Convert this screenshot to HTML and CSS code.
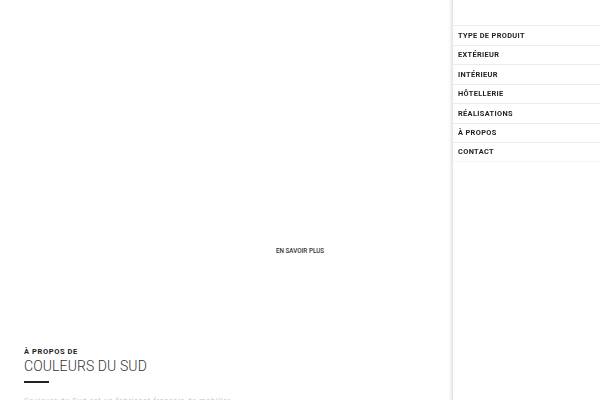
FILE: index.html
```html
<!DOCTYPE html>
<html lang="fr">
<head>
<meta charset="utf-8">
<link rel="stylesheet" href="styles.css">
</head>
<body>
<main class="page">
  <section class="hero">
    <a class="more" href="#">EN SAVOIR PLUS</a>
  </section>
  <section class="about">
    <div class="kicker">À PROPOS DE</div>
    <h1 class="title">COULEURS DU SUD</h1>
    <div class="bar"></div>
    <p class="text">Couleurs du Sud est un fabricant français de mobilier</p>
  </section>
</main>
<nav class="menu">
  <div class="menu-top"></div>
  <ul class="menu-list">
    <li><a href="#">TYPE DE PRODUIT</a></li>
    <li><a href="#">EXTÉRIEUR</a></li>
    <li><a href="#">INTÉRIEUR</a></li>
    <li><a href="#">HÔTELLERIE</a></li>
    <li><a href="#">RÉALISATIONS</a></li>
    <li><a href="#">À PROPOS</a></li>
    <li><a href="#">CONTACT</a></li>
  </ul>
</nav>
</body>
</html>
```
FILE: styles.css
```css
* { box-sizing: border-box; }
html, body { margin: 0; padding: 0; }
body {
  width: 600px;
  height: 400px;
  overflow: hidden;
  background: #fff;
  font-family: Roboto, "Liberation Sans", sans-serif;
  color: #222;
}
.page {
  display: flex;
  flex-direction: column;
}
.hero {
  height: 347px;
  display: flex;
  justify-content: center;
  align-items: flex-start;
  padding-top: 247px;
}
.more {
  font-size: 6.3px;
  font-weight: 500;
  color: #333;
  text-decoration: none;
  letter-spacing: 0;
}
.about {
  padding-left: 24px;
}
.kicker {
  font-size: 7.5px;
  font-weight: 700;
  letter-spacing: 0.6px;
  color: #222;
  line-height: 10px;
}
.title {
  margin: 1px 0 0;
  font-size: 14px;
  font-weight: 300;
  color: #333;
  line-height: 16px;
  letter-spacing: 0.1px;
}
.bar {
  width: 25px;
  height: 2px;
  background: #222;
  margin-top: 7px;
}
.text {
  margin: 13px 0 0;
  font-size: 7px;
  line-height: 10px;
  color: #c4c4c4;
  letter-spacing: 0.8px;
  white-space: nowrap;
}
.menu {
  position: fixed;
  top: 0;
  right: 0;
  width: 148px;
  height: 400px;
  background: #fff;
  box-shadow: -1px 0 3px rgba(0,0,0,0.12);
  border-left: 1px solid #e6e6e6;
}
.menu-top { height: 25px; }
.menu-list {
  list-style: none;
  margin: 0;
  padding: 0;
}
.menu-list li {
  border-top: 1px solid #ececec;
  height: 19.5px;
  display: flex;
  align-items: center;
  padding-left: 5px;
}
.menu-list li:last-child { border-bottom: 1px solid #f6f6f6; }
.menu-list a {
  font-size: 7.4px;
  font-weight: 700;
  letter-spacing: 0.35px;
  color: #222;
  text-decoration: none;
}
```
